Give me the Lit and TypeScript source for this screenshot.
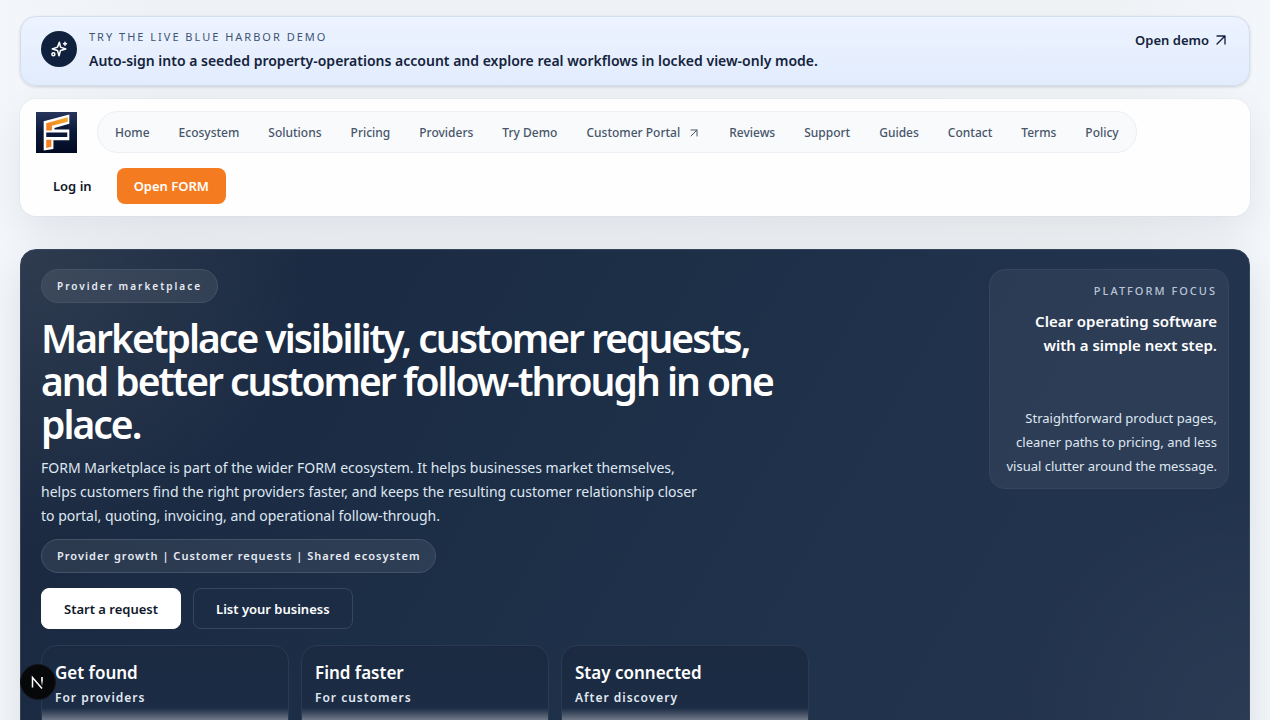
import { LitElement, html, css, svg } from "lit";
import { customElement } from "lit/decorators.js";

const arrow = svg`<path d="M6 6h12v12M6 18 18 6" />`;

const NAV = ["Home", "Ecosystem", "Solutions", "Pricing", "Providers", "Try Demo", "Customer Portal", "Reviews", "Support", "Guides", "Contact", "Terms", "Policy"];

const CARDS = [
  ["Get found", "For providers"],
  ["Find faster", "For customers"],
  ["Stay connected", "After discovery"],
];

@customElement("app-root")
export class AppRoot extends LitElement {
  static styles = css`
    :host {
      display: block;
      height: 100vh;
      overflow: hidden;
      box-sizing: border-box;
      padding: 16px 20px 0;
      font-family: "Noto Sans", "Open Sans", sans-serif;
      font-size: 14px;
      line-height: 24px;
      color: #0f172a;
      background: linear-gradient(90deg, #f3f6fa, #eef1f5 12%, #eff2f5 88%, #f3f6fa);
    }
    * { box-sizing: border-box; }
    h1, h2, p { margin: 0; }
    a { color: inherit; text-decoration: none; }
    .icon {
      fill: none;
      stroke: currentColor;
      stroke-width: 2;
      stroke-linecap: round;
      stroke-linejoin: round;
      flex: none;
    }
    .demo {
      display: flex;
      align-items: flex-start;
      gap: 12px;
      padding: 8px 20px;
      height: 70px;
      border: 1px solid #d3deef;
      border-radius: 16px;
      background: linear-gradient(180deg, #edf3ff, #e2ecfd);
      box-shadow: 0 1px 3px rgba(15, 23, 42, 0.16);
    }
    .badge {
      display: grid;
      place-items: center;
      width: 36px;
      height: 36px;
      margin-top: 6px;
      border-radius: 50%;
      background: #10213d;
      color: #fff;
    }
    .demo-text { flex: 1; }
    .kicker {
      font-size: 11px;
      letter-spacing: 2px;
      color: #3d5475;
      text-transform: uppercase;
    }
    .demo-title { font-weight: 600; color: #14233c; }
    .demo-link {
      display: flex;
      align-items: center;
      gap: 4px;
      padding: 3px 0;
      font-size: 13px;
      font-weight: 600;
      color: #14233c;
    }
    .header {
      display: flex;
      flex-wrap: wrap;
      align-items: center;
      gap: 15px 20px;
      margin-top: 13px;
      padding: 12px 16px;
      border-radius: 16px;
      background: #fefefe;
      box-shadow: 0 16px 40px rgba(15, 23, 42, 0.07), 0 0 0 1px rgba(226, 232, 240, 0.4);
    }
    .logo { display: block; width: 41px; height: 41px; }
    .nav {
      display: flex;
      gap: 5px;
      padding: 4px 5px;
      border: 1px solid #eceff4;
      border-radius: 24px;
      background: #f8fafc;
      font-size: 12px;
      font-weight: 500;
      color: #475569;
    }
    .nav a {
      display: flex;
      align-items: center;
      gap: 8px;
      padding: 5px 12px 3px;
      white-space: nowrap;
    }
    .actions { display: flex; flex-basis: 100%; gap: 8px; }
    button { font: inherit; cursor: pointer; }
    .btn {
      height: 36px;
      padding: 0 17px;
      border: 0;
      border-radius: 8px;
      background: none;
      color: #0f172a;
      font-size: 13px;
      font-weight: 600;
    }
    .orange { background: #f47b20; color: #fff; }
    .hero {
      display: flex;
      justify-content: space-between;
      align-items: flex-start;
      gap: 20px;
      height: 560px;
      margin-top: 33px;
      padding: 19px 20px 0;
      border: 1px solid #34455c;
      border-radius: 16px;
      color: #fff;
      background:
        radial-gradient(circle at 0 0, rgba(255, 255, 255, 0.09), transparent 300px),
        radial-gradient(circle at 100% 85%, rgba(255, 255, 255, 0.04), transparent 240px),
        linear-gradient(120deg, #1a283e, #1c2d46 35%, #22334d 75%, #22334d);
      box-shadow: 0 16px 40px rgba(15, 23, 42, 0.1);
    }
    .copy {
      display: flex;
      flex-direction: column;
      align-items: flex-start;
      flex: 0 1 768px;
    }
    .pill {
      padding: 4px 15px;
      border: 1px solid #445268;
      border-radius: 20px;
      background: rgba(255, 255, 255, 0.08);
      font-size: 11px;
      font-weight: 600;
      letter-spacing: 1px;
      color: #e6ecf5;
    }
    .wide { font-size: 10px; letter-spacing: 2px; }
    h1 {
      margin-top: 13px;
      font-size: 39px;
      line-height: 43px;
      font-weight: 600;
      letter-spacing: -2px;
    }
    .lead {
      max-width: 672px;
      margin: 11px 0;
      color: #dfe7f1;
    }
    .cta { display: flex; gap: 12px; margin: 15px 0 16px; }
    .cta button {
      height: 41px;
      padding: 0 22px;
      border: 1px solid #35465f;
      border-radius: 8px;
      background: #1c2c45;
      color: #fff;
      font-size: 13px;
      font-weight: 600;
    }
    .cta .white { background: #fff; border-color: #fff; color: #0f172a; }
    .cards {
      display: grid;
      grid-template-columns: repeat(3, 1fr);
      gap: 12px;
      width: 100%;
    }
    .card {
      height: 150px;
      padding: 14px 13px;
      border: 1px solid #293a53;
      border-radius: 16px;
      background: linear-gradient(180deg, #1b2a41, #1b2c44 62px, #3d4a5e 67px, #6f7988 74px, #8b95a3 90px);
    }
    .card h2 { font-size: 17px; line-height: 26px; font-weight: 600; }
    .card p { font-size: 12px; font-weight: 600; letter-spacing: 1px; color: #e2e9f2; }
    .focus {
      display: flex;
      flex-direction: column;
      justify-content: space-between;
      flex: 0 0 240px;
      height: 220px;
      padding: 9px 11px 10px;
      border: 1px solid #35455d;
      border-radius: 16px;
      background: rgba(255, 255, 255, 0.05);
      text-align: right;
      font-size: 13px;
      color: #dfe7f1;
    }
    .focus .kicker { color: #b9c5d6; font-weight: 500; }
    .focus-title { margin-top: 6px; font-size: 15px; font-weight: 600; color: #fff; }
    .dev {
      position: fixed;
      left: 20px;
      bottom: 20px;
      display: grid;
      place-items: center;
      width: 36px;
      height: 36px;
      padding: 0;
      border: 1px solid #16181d;
      border-radius: 50%;
      background: #07080a;
      color: #fff;
    }
  `;

  render() {
    return html`
      <section class="demo">
        <span class="badge">
          <svg class="icon" width="18" height="18" viewBox="0 0 24 24">
            <path d="M12.500 3 14 9.500 21 12l-7 2-2 7-2-7-7-2 7-2.500Z" />
            <path d="M20 3v4M18 5h4" /><circle cx="4.500" cy="19" r="2" />
          </svg>
        </span>
        <div class="demo-text">
          <p class="kicker">Try the live Blue Harbor demo</p>
          <p class="demo-title">Auto-sign into a seeded property-operations account and explore real workflows in locked view-only mode.</p>
        </div>
        <a class="demo-link" href="#demo">Open demo
          <svg class="icon" width="16" height="16" viewBox="0 0 24 24">${arrow}</svg>
        </a>
      </section>

      <header class="header">
        <a href="#home" aria-label="FORM">
          <svg class="logo" viewBox="0 0 40 40">
            <defs>
              <linearGradient id="bg" x1="0" y1="0" x2="0" y2="1"><stop stop-color="#27355c" /><stop offset=".5" stop-color="#0b1838" /><stop offset="1" stop-color="#020a22" /></linearGradient>
              <linearGradient id="or" x1="1" y1="0" x2="0" y2="1"><stop stop-color="#f6ae2c" /><stop offset="1" stop-color="#f0781e" /></linearGradient>
            </defs>
            <path fill="url(#bg)" d="M0 0h40v40H0z" />
            <path fill="#fff" d="M7.500 9 32.500 2.500v9L18 15.500V17h14.500v10.500H17V36l-9.500 1.500z" />
            <path fill="url(#or)" d="M10 11 31 5v4.500L15.500 13.500V18H10z" />
            <path fill="#0c1838" d="M18.500 16 31 12.500V16zM10 20h20.500v4.500H10z" />
            <path fill="#f17e1f" d="M10 27h5v7l-5 1z" />
          </svg>
        </a>
        <nav class="nav">
          ${NAV.map((n) => html`<a href="#${n.toLowerCase().replace(" ", "-")}">${n}${n === "Customer Portal"
            ? html`<svg class="icon" width="12" height="12" viewBox="0 0 24 24">${arrow}</svg>` : ""}</a>`)}
        </nav>
        <div class="actions">
          <button class="btn">Log in</button>
          <button class="btn orange">Open FORM</button>
        </div>
      </header>

      <main class="hero">
        <div class="copy">
          <span class="pill wide">Provider marketplace</span>
          <h1>Marketplace visibility, customer requests, and better customer follow-through in one place.</h1>
          <p class="lead">FORM Marketplace is part of the wider FORM ecosystem. It helps businesses market themselves, helps customers find the right providers faster, and keeps the resulting customer relationship closer to portal, quoting, invoicing, and operational follow-through.</p>
          <span class="pill">Provider growth | Customer requests | Shared ecosystem</span>
          <div class="cta">
            <button class="white">Start a request</button>
            <button>List your business</button>
          </div>
          <div class="cards">
            ${CARDS.map(([t, s]) => html`<article class="card"><h2>${t}</h2><p>${s}</p></article>`)}
          </div>
        </div>
        <aside class="focus">
          <div>
            <p class="kicker">Platform focus</p>
            <p class="focus-title">Clear operating software with a simple next step.</p>
          </div>
          <p>Straightforward product pages, cleaner paths to pricing, and less visual clutter around the message.</p>
        </aside>
      </main>

      <button class="dev" aria-label="Developer tools">
        <svg width="20" height="20" viewBox="0 0 20 20" fill="none" stroke="#fff" stroke-width="1.500">
          <defs><linearGradient id="fade" x1="0" y1="0" x2="0" y2="1"><stop offset=".4" stop-color="#fff" /><stop offset="1" stop-color="#fff" stop-opacity="0" /></linearGradient></defs>
          <path d="M4.500 15.500V5.500l9.500 11" /><path fill="url(#fade)" stroke="none" d="M13.200 5h1.600v9h-1.600z" />
        </svg>
      </button>
    `;
  }
}
